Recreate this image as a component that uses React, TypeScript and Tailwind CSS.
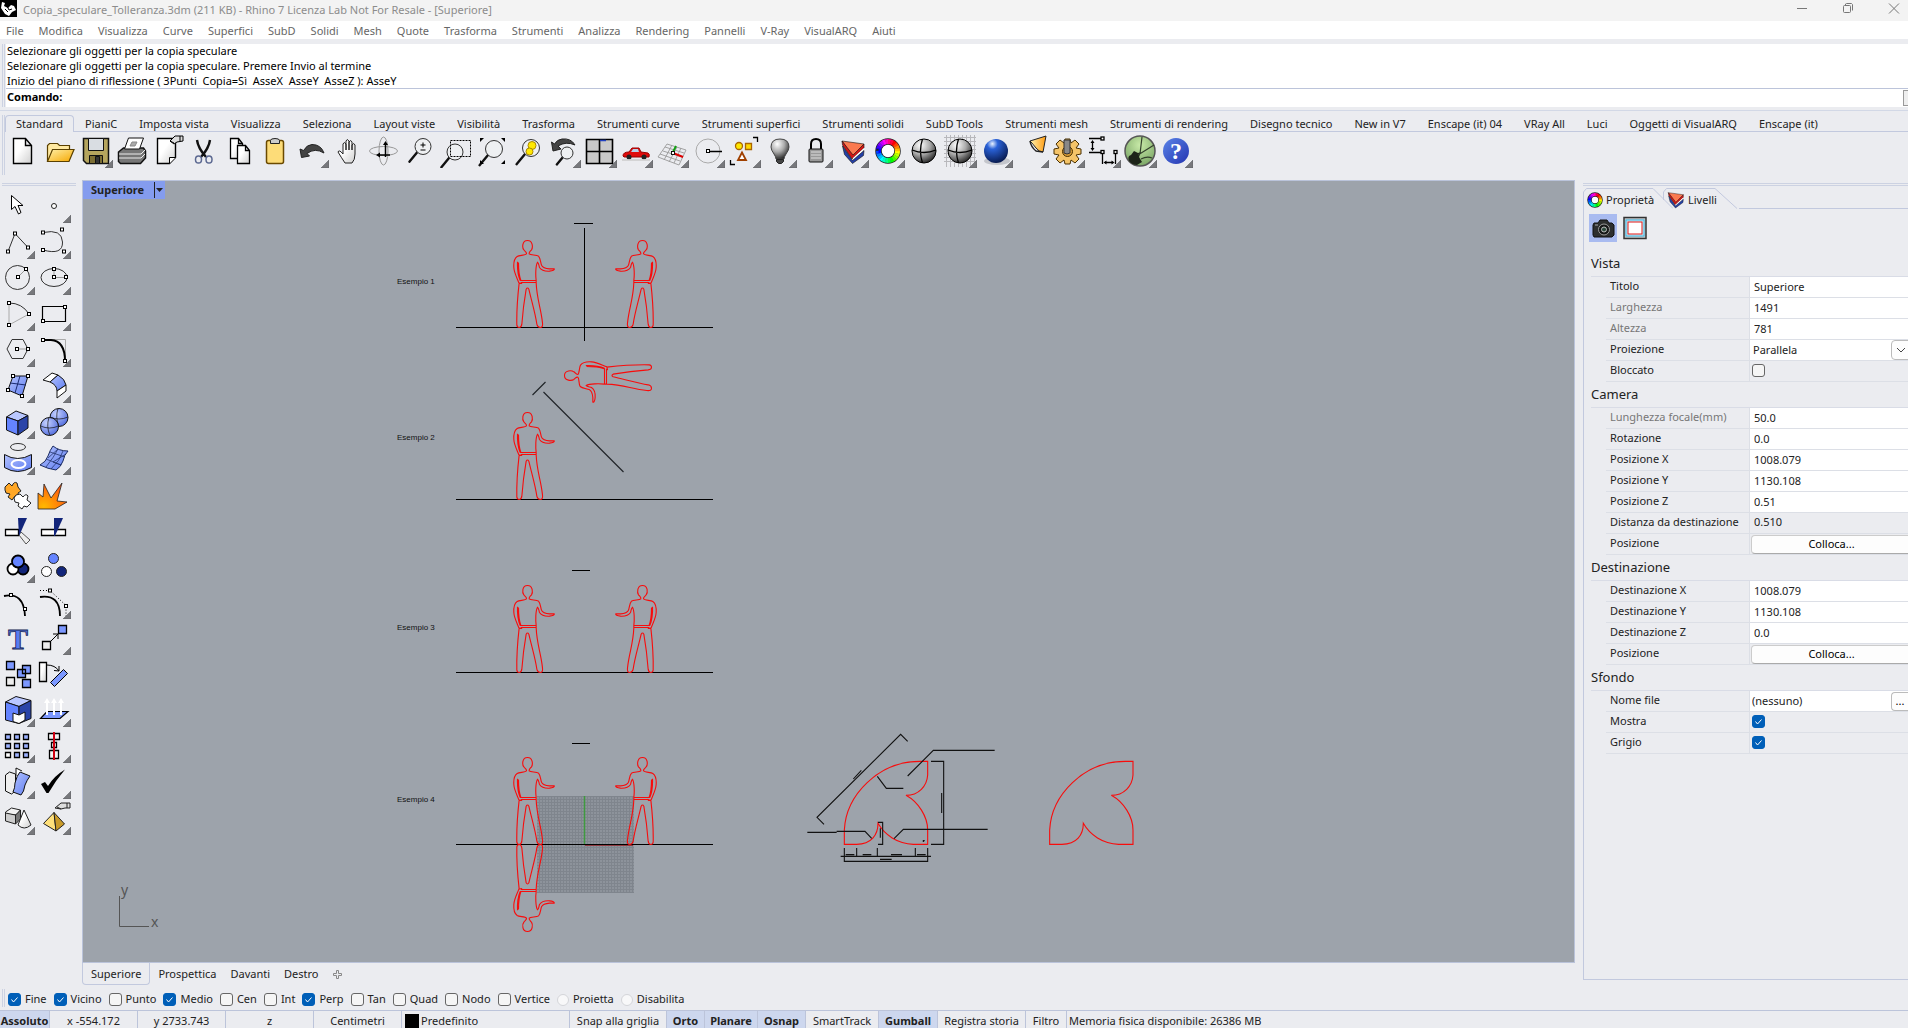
import { useState } from "react";
import type { ReactNode } from "react";

const MENU = ["File", "Modifica", "Visualizza", "Curve", "Superfici", "SubD", "Solidi", "Mesh", "Quote", "Trasforma", "Strumenti", "Analizza", "Rendering", "Pannelli", "V-Ray", "VisualARQ", "Aiuti"];

const TOOLBAR_TABS = ["Standard", "PianiC", "Imposta vista", "Visualizza", "Seleziona", "Layout viste", "Visibilità", "Trasforma", "Strumenti curve", "Strumenti superfici", "Strumenti solidi", "SubD Tools", "Strumenti mesh", "Strumenti di rendering", "Disegno tecnico", "New in V7", "Enscape (it) 04", "VRay All", "Luci", "Oggetti di VisualARQ", "Enscape (it)"];

type Tool = { name: string; more?: boolean; art: ReactNode };

// small square control point
function Node({ x, y }: { x: number; y: number }) {
  return <rect x={x - 1.5} y={y - 1.5} width="3" height="3" fill="#fff" stroke="#000" />;
}

function ColorRing({ cx, cy, r, w }: { cx: number; cy: number; r: number; w: number }) {
  return (
    <g fill="none">
      <circle cx={cx} cy={cy} r={r} fill="#fff" stroke="#222" strokeWidth={w + 1.5} />
      {Array.from({ length: 24 }, (_, i) => (
        <circle key={i} cx={cx} cy={cy} r={r} pathLength={24} stroke={`hsl(${(i * 15 + 60) % 360} 100% 50%)`} strokeWidth={w} strokeDasharray="1.1 22.9" strokeDashoffset={-i} />
      ))}
    </g>
  );
}

function Lens({ x, y, r }: { x: number; y: number; r: number }) {
  return (
    <g>
      <path d={`M${x - r * 0.7} ${y + r * 0.7}L${x - r * 1.7} ${y + r * 1.9}`} stroke="#111" strokeWidth="2.4" strokeLinecap="round" />
      <circle cx={x} cy={y} r={r} fill="#eef0f2" stroke="#333" />
    </g>
  );
}

const LAYERS_ART = (
  <g stroke="#111" strokeWidth="0.600" strokeLinejoin="round">
    <path d="M9 9l22 3-11 13z" fill="#fb7a50" />
    <path d="M9 9l11 14 11-11v4L19 27 9.500 13z" fill="#d01616" />
    <path d="M20 26l11-10v2L19.500 28.500z" fill="#fff" stroke="none" />
    <path d="M9.500 14L19.500 28.500 31 18.500l-.5 5L19.500 31.500l-8-9z" fill="#2440a8" />
  </g>
);

const TOP_TOOLS: Tool[] = [
  { name: "Nuovo", art: <path d="M8.500 6.500h12l6 7v18h-18zM20.500 6.500v7h6" fill="url(#paper)" stroke="#000" strokeWidth="1.400" /> },
  {
    name: "Apri",
    art: (
      <g stroke="#5a4000" strokeWidth="1.200">
        <path d="M6.500 29V13.500l2-2h8l2 2h10V18" fill="#ffe9a0" />
        <path d="M6.500 29.500l5-12h21.500l-5 12z" fill="url(#gold)" />
      </g>
    ),
  },
  {
    name: "Salva",
    more: true,
    art: (
      <g stroke="#111">
        <path d="M6.500 6.500h25v25h-22l-3-3z" fill="#b5a55e" strokeWidth="1.500" />
        <path d="M11.500 6.500h15v12h-15z" fill="#d9dde2" />
        <path d="M12.500 23.500h13v8h-13z" fill="#7c6e34" />
        <path d="M18.500 24.500h4v7h-4z" fill="#333" />
      </g>
    ),
  },
  {
    name: "Stampa",
    art: (
      <g stroke="#111">
        <path d="M5.500 20l5-4h20l2 3v7l-5 5.500h-20l-2-2z" fill="#777" strokeWidth="1.500" />
        <path d="M11.500 17l4-11h15l-4 11z" fill="#fff" />
        <path d="M17 14l2-4h5l-2 4z" fill="#aaa" stroke="#888" />
        <path d="M6 22h22l4-4M6 26h22l4-4" fill="none" stroke="#eee" />
      </g>
    ),
  },
  {
    name: "Proprietà documento",
    art: (
      <g stroke="#000">
        <path d="M8.500 6.500h18v19l-6 6h-12z" fill="url(#paper)" strokeWidth="1.400" />
        <path d="M20.500 31.500v-6h6" fill="#fff" />
        <path d="M21 9l5-5h8v5l-6 1-3 2z" fill="#ddd" />
        <path d="M31 4v5M21 9l4 2" fill="none" />
      </g>
    ),
  },
  {
    name: "Taglia",
    art: (
      <g fill="none" strokeWidth="1.500">
        <path d="M12 8q1 8 9 17M25 8q-1 8-9 17" stroke="#111" strokeWidth="2.400" />
        <ellipse cx="13.500" cy="27.500" rx="3" ry="3.600" stroke="#5a6790" />
        <ellipse cx="24" cy="27.500" rx="3" ry="3.600" stroke="#5a6790" />
      </g>
    ),
  },
  {
    name: "Copia",
    art: (
      <g fill="url(#paper)" stroke="#000" strokeWidth="1.300">
        <path d="M9.500 6.500h8l4 5v15h-12zM17.500 6.500v5h4" />
        <path d="M16.500 13.500h8l4 5v13h-12zM24.500 13.500v5h4" />
      </g>
    ),
  },
  {
    name: "Incolla",
    art: (
      <g stroke="#6b4a00">
        <rect x="9.500" y="8.500" width="17" height="23" rx="2" fill="#fddc78" strokeWidth="1.500" />
        <path d="M13.500 8.500q0-2 4.500-2t4.500 2v3h-9z" fill="#ccc" stroke="#222" />
      </g>
    ),
  },
  {
    name: "Annulla",
    more: true,
    art: <path d="M7 17l1.500 8.500 8-1.500-2.500-2.500q8-6 17-.5-3-8.500-12-8.500-5 0-8.500 6z" fill="#444" stroke="#222" />,
  },
  {
    name: "Panoramica",
    art: <path d="M16 31q-4-6-7-11 1-3 5 2V12q1-3 3 0v6-9q1-3 3 0v9-8q2-3 3 0v8-5q2-3 3 0v9q0 6-3 9z" fill="url(#paper)" stroke="#222" />,
  },
  {
    name: "Ruota vista",
    art: (
      <g fill="none" stroke="#999">
        <ellipse cx="18.500" cy="19" rx="14" ry="4.500" />
        <ellipse cx="18.500" cy="19" rx="4.500" ry="14" />
        <path d="M20.500 12v13M13 23h12" stroke="#000" strokeWidth="1.500" />
        <path d="M18 13l2.500-4 2.500 4zM15 20.500L11 23l4 2.500z" fill="#000" stroke="none" />
      </g>
    ),
  },
  {
    name: "Zoom dinamico",
    art: (
      <g>
        <Lens x={22} y={14.500} r={8} />
        <path d="M19.500 13h5M22 10.500v5M19.500 18h5" stroke="#000" />
      </g>
    ),
  },
  {
    name: "Zoom finestra",
    art: (
      <g>
        <Lens x={18} y={20} r={8} />
        <path d="M13.500 8.500h20v16h-20z" fill="none" stroke="#000" strokeDasharray="2 1" />
      </g>
    ),
  },
  {
    name: "Zoom estensioni",
    art: (
      <g>
        <Lens x={21} y={17} r={8.500} />
        <path d="M7 6h4l-4 4zM32 6h-4l4 4zM7 32h4l-4-4zM32 32h-4l4-4z" fill="#000" />
      </g>
    ),
  },
  {
    name: "Zoom selezione",
    art: (
      <g>
        <Lens x={22} y={16} r={8.500} />
        <circle cx="23" cy="13.500" r="4" fill="#ffe800" stroke="#a80" />
        <circle cx="20.500" cy="19.500" r="3.500" fill="#ffe800" stroke="#a80" />
      </g>
    ),
  },
  {
    name: "Annulla vista",
    more: true,
    art: (
      <g>
        <path d="M6.500 10l1.500 9 8-2-3-3q8-5 17-1-4-7-13-6-5 .5-7.500 5z" fill="#444" stroke="#222" />
        <Lens x={22} y={21} r={6} />
      </g>
    ),
  },
  {
    name: "Quattro viste",
    more: true,
    art: (
      <g stroke="#000">
        <path d="M5.500 7.500h26v24h-26z" fill="#c9c9c9" strokeWidth="1.600" />
        <path d="M18.500 7.500v24M5.500 19.500h26" strokeWidth="1.600" />
        <path d="M19 8.500h6" stroke="#2040c0" strokeWidth="1.500" />
      </g>
    ),
  },
  {
    name: "Auto",
    more: true,
    art: (
      <g>
        <path d="M6 24q0-4 6-4l3-4h7l2 4 7 1q2 1 1 4H7z" fill="#e00b0b" stroke="#900" />
        <path d="M14 20l2-3h5l1 3z" fill="#b8d0e8" />
        <circle cx="12" cy="25" r="2.500" fill="#222" />
        <circle cx="27" cy="25" r="2.500" fill="#222" />
        <path d="M5 28h28" stroke="#ccc" strokeWidth="1.500" />
      </g>
    ),
  },
  {
    name: "Piano di costruzione",
    more: true,
    art: (
      <g fill="none" stroke="#999" strokeWidth="0.900">
        <path d="M14 12l19 6-7 15-21-8zM12 15l19 6M10 19l19 6M7 22l20 7M19 13l-8 15M24 15l-8 15M28 16l-7 15" />
        <path d="M20 20l3-6" stroke="#11a011" strokeWidth="2" />
        <path d="M20 21l10 4" stroke="#d00" strokeWidth="2" />
        <Node x={20} y={21} />
      </g>
    ),
  },
  {
    name: "Osnap",
    more: true,
    art: (
      <g>
        <circle cx="19" cy="19" r="12" fill="none" stroke="#aaa" />
        <path d="M19 19.500h14" stroke="#000" strokeWidth="1.500" />
        <Node x={19} y={19} />
      </g>
    ),
  },
  {
    name: "Seleziona",
    more: true,
    art: (
      <g strokeWidth="1.300">
        <circle cx="14" cy="14" r="3.500" fill="#ffe800" stroke="#a60" />
        <path d="M20.500 11.500h6v6h-6z" fill="#ffd800" stroke="#a60" />
        <path d="M17 20.500l4 7.500h-8z" fill="#fff" stroke="#a04000" strokeWidth="1.800" />
        <path d="M28 5.500h4.500V10M5.500 28v4.500H10" fill="none" stroke="#000" />
      </g>
    ),
  },
  {
    name: "Nascondi",
    more: true,
    art: (
      <g>
        <path d="M19 7q-9 0-9 8 0 3 3 7 2 3 2 5h8q0-2 2-5 3-4 3-7 0-8-9-8z" fill="url(#grayBall)" stroke="#444" />
        <path d="M15.500 27.500h7v2l-2 2h-3l-2-2z" fill="#444" stroke="#222" />
      </g>
    ),
  },
  {
    name: "Blocca",
    more: true,
    art: (
      <g>
        <path d="M14 17v-5q0-5 5-5t5 5v5" fill="none" stroke="#000" strokeWidth="2" />
        <rect x="12" y="17" width="14" height="13" rx="1" fill="#999" stroke="#111" />
        <path d="M14 20h10M14 23h10M14 26h10" stroke="#ddd" />
      </g>
    ),
  },
  { name: "Livelli", more: true, art: LAYERS_ART },
  { name: "Colore oggetto", more: true, art: <ColorRing cx={19} cy={19} r={9.500} w={5} /> },
  {
    name: "Ombreggiata",
    art: (
      <g>
        <circle cx="19" cy="19" r="12" fill="url(#grayBall)" stroke="#000" />
        <path d="M17.500 7q-4 12 0 24M7 18q12 5 24 0" fill="none" stroke="#000" strokeWidth="1.300" />
      </g>
    ),
  },
  {
    name: "Ombreggiata selezionati",
    more: true,
    art: (
      <g>
        <path d="M3 5.500h32M3 9.500h32M3 13.500h32M3 17.500h32M3 21.500h32M3 25.500h32M3 29.500h32M5.500 3v32M9.500 3v32M13.500 3v32M17.500 3v32M21.500 3v32M25.500 3v32M29.500 3v32M33.500 3v32" stroke="#b8b8bc" />
        <circle cx="19" cy="19" r="12" fill="url(#grayBall)" stroke="#000" />
        <path d="M17.500 7q-4 12 0 24M7 18q12 5 24 0" fill="none" stroke="#000" strokeWidth="1.300" />
      </g>
    ),
  },
  {
    name: "Render",
    more: true,
    art: (
      <g>
        <ellipse cx="20" cy="29" rx="13" ry="4" fill="#c4c6cc" />
        <circle cx="19" cy="19" r="12" fill="url(#blueBall)" />
      </g>
    ),
  },
  {
    name: "Luci",
    more: true,
    art: (
      <g stroke="#222">
        <path d="M17 9l16-5-3 16q-4 0-7-4t-6-7z" fill="url(#spot)" />
        <path d="M17 9q1 6 6 10l7 1" fill="none" strokeWidth="1.500" />
      </g>
    ),
  },
  {
    name: "Opzioni",
    more: true,
    art: (
      <g>
        <path d="M16 7h5l1 4 4-3 4 4-3 4 5 1v5l-5 1 3 4-4 4-4-3-1 4h-5l-1-4-4 3-4-4 3-4-5-1v-5l5-1-3-4 4-4 4 3z" fill="#f5c468" stroke="#4a3000" />
        <circle cx="18.500" cy="19.500" r="5" fill="#d69a34" stroke="#4a3000" />
        <path d="M15 8h6v13q-3 2-6 0z" fill="#888" stroke="#333" />
      </g>
    ),
  },
  {
    name: "Quote",
    more: true,
    art: (
      <g stroke="#000" strokeWidth="1.300" fill="none">
        <path d="M4 6.500h14M4 20.500h14M7.500 10v7M17.500 20v12M30.500 20v12M20 30.500h8" />
        <path d="M5.500 11l2-3 2 3zM5.500 16l2 3 2-3zM21.500 28.500l-3 2 3 2zM26.500 28.500l3 2-3 2z" fill="#000" stroke="none" />
        <Node x={17.500} y={6.500} />
        <Node x={17.500} y={20} />
        <Node x={30.500} y={20} />
      </g>
    ),
  },
  {
    name: "Grasshopper",
    more: true,
    art: (
      <g>
        <circle cx="19" cy="19" r="15" fill="url(#greenBall)" stroke="#555" strokeWidth="1.500" />
        <path d="M8 29q-2-5 2-6l3-4 4 2 3-1-2 5 3 5-5 3q-5 0-8-4z" fill="#1c2418" />
        <path d="M17 23L33 13M19 22L21 5M20 27q6-3 11-1" fill="none" stroke="#33402c" strokeWidth="1.200" />
      </g>
    ),
  },
  {
    name: "Guida",
    more: true,
    art: (
      <g>
        <circle cx="19" cy="19" r="13" fill="url(#helpBall)" />
        <text x="19" y="27" textAnchor="middle" fill="#fff" fontSize="24" fontWeight="700" fontFamily="Liberation Serif, serif">?</text>
      </g>
    ),
  },
];

const SIDE_TOOLS: Tool[] = [
  { name: "Seleziona", art: <path d="M12.500 8.500v14l3.500-3 3.500 7.500 2.500-1.500-3-7h5z" fill="#fff" stroke="#000" /> },
  { name: "Punto", more: true, art: <circle cx="19" cy="19" r="2.500" fill="#fff" stroke="#222" /> },
  {
    name: "Polilinea",
    more: true,
    art: (
      <g>
        <path d="M9 28.500l7-18 13 14" fill="none" stroke="#333" />
        <Node x={9} y={28.500} />
        <Node x={16} y={10.500} />
        <Node x={29} y={24.500} />
      </g>
    ),
  },
  {
    name: "Curva",
    more: true,
    art: (
      <g>
        <path d="M8 9.500q19-4 19.500 9.500T8 27" fill="none" stroke="#333" />
        <Node x={8} y={9.500} />
        <Node x={27} y={6.500} />
        <Node x={8} y={27} />
        <Node x={29} y={28.500} />
      </g>
    ),
  },
  {
    name: "Cerchio",
    more: true,
    art: (
      <g>
        <circle cx="18.500" cy="18.500" r="12" fill="none" stroke="#333" />
        <path d="M19 18l8-8" stroke="#999" />
        <Node x={19} y={18} />
        <Node x={27} y={10} />
      </g>
    ),
  },
  {
    name: "Ellisse",
    more: true,
    art: (
      <g>
        <ellipse cx="19" cy="18.500" rx="13" ry="9" fill="none" stroke="#333" />
        <path d="M19 10v8.500h12" fill="none" stroke="#999" />
        <Node x={19} y={10} />
        <Node x={19} y={18} />
        <Node x={31} y={18} />
      </g>
    ),
  },
  {
    name: "Arco",
    more: true,
    art: (
      <g fill="none">
        <path d="M10 8v22l20-11" stroke="#aaa" />
        <path d="M10 8q13 0 20 11" stroke="#333" />
        <Node x={10} y={8} />
        <Node x={30} y={19} />
        <Node x={10} y={30} />
      </g>
    ),
  },
  {
    name: "Rettangolo",
    more: true,
    art: (
      <g>
        <path d="M7.500 11.500h23v15h-23z" fill="none" stroke="#000" strokeWidth="1.200" />
        <Node x={30} y={12} />
        <Node x={8} y={26} />
      </g>
    ),
  },
  {
    name: "Poligono",
    more: true,
    art: (
      <g>
        <path d="M8 18l5-9.500h11L29 18l-5 9.500H13z" fill="none" stroke="#333" />
        <path d="M18 18h11" stroke="#999" />
        <Node x={18} y={18} />
        <Node x={29} y={18} />
      </g>
    ),
  },
  {
    name: "Raccorda",
    more: true,
    art: (
      <g fill="none">
        <path d="M8 8.500h22.500V30" stroke="#aaa" />
        <path d="M8 9h8q14 1 14 21" stroke="#000" strokeWidth="2" />
        <Node x={8} y={9} />
        <Node x={30} y={30} />
      </g>
    ),
  },
  {
    name: "Superficie",
    more: true,
    art: (
      <g>
        <path d="M14 9h15l-6 20-14-6z" fill="url(#blue)" stroke="#111" />
        <path d="M21 9l-5 17M11 16l16 2" stroke="#1a2a70" />
        <Node x={14} y={9} />
        <Node x={29} y={9} />
        <Node x={23} y={29} />
        <Node x={9} y={23} />
      </g>
    ),
  },
  {
    name: "Raccorda superfici",
    more: true,
    art: (
      <g stroke="#111">
        <path d="M8 13l9-7 6 2-8 7z" fill="#fff" />
        <path d="M15 15l8-7q7 4 8 10l-9 6q0-6-7-9z" fill="url(#blue)" />
        <path d="M22 24l9-6v6l-9 7z" fill="#fff" />
      </g>
    ),
  },
  {
    name: "Parallelepipedo",
    more: true,
    art: (
      <g stroke="#111" strokeLinejoin="round">
        <path d="M17 8l12 4.500L19 18 7.500 14z" fill="#b9c7ff" />
        <path d="M7.500 14L19 18v14L7.500 27z" fill="#6484ff" />
        <path d="M19 18l10-5.500V25l-10 7z" fill="#2a44a8" />
      </g>
    ),
  },
  {
    name: "Sfere",
    more: true,
    art: (
      <g stroke="#111">
        <circle cx="24" cy="14.500" r="9" fill="url(#blueSoft)" />
        <path d="M23 5.500q-3 9 1 18M15 14q9 4 18 0" fill="none" strokeWidth="0.700" />
        <circle cx="14.500" cy="23.500" r="9" fill="url(#blueSoft)" />
        <path d="M14 14.500q-3 9 1 18M5.500 23q9 4 18 0" fill="none" strokeWidth="0.700" />
      </g>
    ),
  },
  {
    name: "Superficie da curve",
    more: true,
    art: (
      <g>
        <ellipse cx="19" cy="8" rx="7.500" ry="3.500" fill="none" stroke="#333" />
        <path d="M5.500 15.500q13 8 27 0v13q-14 8-27 0z" fill="url(#blue)" stroke="#111" />
        <ellipse cx="19.500" cy="25" rx="7" ry="4" fill="none" stroke="#fff" strokeWidth="2" />
      </g>
    ),
  },
  {
    name: "Mesh",
    more: true,
    art: (
      <g stroke="#1a2a60">
        <path d="M18 7q6 5 15 5-4 4-5 10-2 6-7 9-8-1-16-5 6-3 8-9 2-6 5-10z" fill="url(#blue)" />
        <path d="M23 10q-4 8-12 18M28 12q-3 10-12 18M15 13l15 5M11 20l15 6M23 10l-10 9M31 15l-13 8M26 26l-8-3" fill="none" strokeWidth="0.700" />
      </g>
    ),
  },
  {
    name: "Unisci",
    art: (
      <g stroke="#222">
        <path d="M6 12l4-4 3 3q2-5 5-3l1 4 3 4-3 2 1 4-4-1-3 4-4-3 2-3-4-1-1-3z" fill="#ffa726" />
        <path d="M17 20l4-1 3 3q3-4 5-1l-1 4 4 3-4 4-3-1-2 3-4-3 1-3-4-1-1-4z" fill="#fff" />
      </g>
    ),
  },
  { name: "Esplodi", art: <path d="M3 34V18l5 4L9 9l7 14L27 8l-5 18 10 1-12 7z" fill="url(#blast)" stroke="#222" strokeWidth="0.800" /> },
  {
    name: "Tronca",
    art: (
      <g>
        <path d="M6.500 18.500h13v6h-13z" fill="#fff" stroke="#000" strokeWidth="1.300" />
        <path d="M22 21l9 8-4 4-7-9z" fill="#eee" stroke="#555" />
        <path d="M19 7h9l-8 18z" fill="#12257a" />
      </g>
    ),
  },
  {
    name: "Suddividi",
    art: (
      <g>
        <path d="M6.500 18.500h24v6h-24z" fill="#fff" stroke="#000" strokeWidth="1.300" />
        <path d="M19 7h9l-8 18h-1z" fill="#12257a" />
      </g>
    ),
  },
  {
    name: "Booleana",
    more: true,
    art: (
      <g stroke="#000" strokeWidth="1.800">
        <circle cx="24" cy="22" r="5.500" fill="#12257a" />
        <circle cx="14" cy="22" r="5.500" fill="#fff" />
        <circle cx="19" cy="14.500" r="6" fill="#6484ff" />
      </g>
    ),
  },
  {
    name: "Raggruppa",
    art: (
      <g stroke="#222">
        <circle cx="18.500" cy="11.500" r="5" fill="#6484ff" />
        <circle cx="11.500" cy="24.500" r="5" fill="#fff" />
        <circle cx="26.500" cy="24.500" r="5" fill="#12257a" />
      </g>
    ),
  },
  {
    name: "Modifica punti",
    art: (
      <g>
        <path d="M5 13q20-4 21 20" fill="none" stroke="#000" strokeWidth="1.800" />
        <Node x={12} y={12} />
        <Node x={26} y={26} />
      </g>
    ),
  },
  {
    name: "Punti di controllo",
    more: true,
    art: (
      <g fill="none" stroke="#000">
        <path d="M5 14q20-3 20 19" strokeWidth="1.800" />
        <path d="M5 7.500h10l16 15V33" strokeDasharray="1 2" />
        <Node x={15} y={7.500} />
        <Node x={31} y={23} />
      </g>
    ),
  },
  {
    name: "Testo",
    art: <text x="19" y="30" textAnchor="middle" fill="#5a7cf0" stroke="#111c50" strokeWidth="0.800" fontSize="30" fontWeight="700" fontFamily="Liberation Serif, serif">T</text>,
  },
  {
    name: "Sposta",
    more: true,
    art: (
      <g stroke="#000">
        <path d="M7.500 22.500h8v8h-8z" fill="#eee" strokeWidth="1.300" />
        <path d="M23.500 6.500h8v8h-8z" fill="#7c98ff" strokeWidth="1.300" />
        <path d="M16 22l7-7M18 15h5v5" fill="none" />
      </g>
    ),
  },
  {
    name: "Copia oggetti",
    art: (
      <g stroke="#000" strokeWidth="1.300" fill="#7c98ff">
        <path d="M7.500 6.500h8v8h-8zM23.500 10.500h8v8h-8zM18.500 14.500h8v8h-8zM23.500 24.500h8v8h-8z" />
        <path d="M7.500 22.500h8v8h-8z" fill="#eee" />
      </g>
    ),
  },
  {
    name: "Ruota",
    art: (
      <g stroke="#000">
        <path d="M4.500 7.500h7v19h-7z" fill="url(#paper)" strokeWidth="1.300" />
        <path d="M28.500 14.500l4 4-13 13-4-4z" fill="#7c98ff" />
        <path d="M12 10q8 0 12 6M19 15.500l5 .5V11" fill="none" />
      </g>
    ),
  },
  {
    name: "Scala",
    more: true,
    art: (
      <g stroke="#111" strokeLinejoin="round">
        <path d="M17 5.500l15 4-12 6-13.500-4.500z" fill="#b9c7ff" />
        <path d="M6.500 11L20 15.500v17L6.500 29z" fill="#6484ff" />
        <path d="M20 15.500l12-6v18l-12 5z" fill="#2a44a8" />
        <path d="M14 22l6 2 6-3v8l-6 3.500-6-2z" fill="#fff" />
      </g>
    ),
  },
  {
    name: "Proietta",
    more: true,
    art: (
      <g>
        <path d="M12 20.500h21l-8 7H5.500z" fill="#7c98ff" stroke="#000" strokeWidth="1.200" />
        <path d="M12 24V10M19 24V10M26 24V10" stroke="#fff" strokeWidth="2" />
        <path d="M9 12l3-5 3 5zM16 12l3-5 3 5zM23 12l3-5 3 5z" fill="#fff" />
      </g>
    ),
  },
  {
    name: "Serie",
    more: true,
    art: (
      <g stroke="#000" strokeWidth="1.300" fill="#9db2ff">
        <path d="M6.500 7.500h5v5h-5zM15.500 7.500h5v5h-5zM24.500 7.500h5v5h-5zM6.500 16.500h5v5h-5zM15.500 16.500h5v5h-5zM24.500 16.500h5v5h-5zM15.500 25.500h5v5h-5zM24.500 25.500h5v5h-5z" />
        <path d="M6.500 25.500h5v5h-5z" fill="#fff" />
      </g>
    ),
  },
  {
    name: "Allinea",
    more: true,
    art: (
      <g stroke="#000" fill="#f2f2f2">
        <path d="M13.500 6.500h11v6h-11zM16.500 15.500h5v5h-5zM14.500 23.500h9v8h-9z" strokeWidth="1.300" />
        <path d="M19 5v28" stroke="#d00010" strokeWidth="2" />
      </g>
    ),
  },
  {
    name: "Piega",
    more: true,
    art: (
      <g stroke="#111">
        <path d="M6.500 12l4-3 6 2v17l-4 3-6-3z" fill="#eee" />
        <path d="M17 13V5l6 3" fill="#fff" />
        <path d="M16 20q2-8 5-11l10 4q-3 4-5 9-1 7-4 10l-8-3q2-4 2-9z" fill="url(#blue)" />
      </g>
    ),
  },
  { name: "Controlla", more: true, art: <path d="M6 21l4-2 3 4Q19 13 30 6.500 21 17 13.500 30h-2z" fill="#000" /> },
  {
    name: "Solidi",
    more: true,
    art: (
      <g stroke="#222" strokeLinejoin="round">
        <path d="M6.500 13l6-4 9 2-4 5-11-1z" fill="#f2f2f2" />
        <path d="M6.500 14l10 2v9l-10-3z" fill="#ccc" />
        <path d="M16.500 16l5-5v9l-5 5z" fill="#777" />
        <path d="M25 11l7 15q-7 6-13 0z" fill="url(#paper)" />
      </g>
    ),
  },
  {
    name: "Rendering",
    more: true,
    art: (
      <g stroke="#222">
        <path d="M19 13.500L8.500 24.500 21 32z" fill="#ffe07a" />
        <path d="M19 13.500L29.500 25 21 32z" fill="#c99a28" />
        <path d="M20 9l6-5h9v5h-5l-4 1z" fill="#ddd" />
        <path d="M32 4v5M22 8l4 2" fill="none" />
      </g>
    ),
  },
];

function ToolButton({ tool }: { tool: Tool }) {
  return (
    <button type="button" title={tool.name} aria-label={tool.name} className="h-9 w-9 shrink-0">
      <svg viewBox="0 0 36 36" className="h-9 w-9" fill="none">
        {tool.art}
        {tool.more && <path d="M36 28v8h-8z" fill="#77787c" stroke="#55565a" strokeWidth="0.500" />}
      </svg>
    </button>
  );
}

function Gradients() {
  return (
    <svg className="absolute h-0 w-0" aria-hidden="true">
      <defs>
        <linearGradient id="paper" x2="1" y2="1"><stop offset="0.400" stopColor="#fff" /><stop offset="1" stopColor="#cfcfcf" /></linearGradient>
        <linearGradient id="gold" y2="1" x2="1"><stop stopColor="#fff0a8" /><stop offset="1" stopColor="#f5a700" /></linearGradient>
        <linearGradient id="spot" x2="1"><stop stopColor="#fff3b0" /><stop offset="1" stopColor="#ff9a10" /></linearGradient>
        <linearGradient id="blue" x2="1" y2="1"><stop stopColor="#b4c3ff" /><stop offset="1" stopColor="#5d7cf0" /></linearGradient>
        <radialGradient id="blast" cx="0.200" cy="0.900" r="0.900"><stop stopColor="#ffb800" /><stop offset="1" stopColor="#ff5a10" /></radialGradient>
        <radialGradient id="grayBall" cx="0.350" cy="0.250" r="0.800"><stop stopColor="#fff" /><stop offset="0.500" stopColor="#aaa" /><stop offset="1" stopColor="#222" /></radialGradient>
        <radialGradient id="blueBall" cx="0.350" cy="0.200" r="0.900"><stop stopColor="#e8f2ff" /><stop offset="0.250" stopColor="#2a62d8" /><stop offset="1" stopColor="#03103c" /></radialGradient>
        <radialGradient id="blueSoft" cx="0.350" cy="0.300" r="0.800"><stop stopColor="#c6d2ff" /><stop offset="1" stopColor="#4a66dc" /></radialGradient>
        <radialGradient id="greenBall" cx="0.500" cy="0.300" r="0.800"><stop stopColor="#c8eaa8" /><stop offset="1" stopColor="#6f9c5c" /></radialGradient>
        <linearGradient id="helpBall" y2="1"><stop stopColor="#5a84e8" /><stop offset="1" stopColor="#2434b0" /></linearGradient>
        <pattern id="grid" width="3" height="3" patternUnits="userSpaceOnUse"><path d="M0 .5h3M.5 0v3" stroke="#7f858d" /></pattern>
        <path
          id="person"
          vectorEffect="non-scaling-stroke"
          fill="none"
          stroke="#f80c0c"
          strokeWidth="1.100"
          d="M-3-221C-2-226-8-228-11-233-16-239-17-261 0-261S16-239 12-233C8-228 4-226 5-221 9-216 27-219 33-214 39-208 39-195 42-187 46-179 55-177 66-176H80C82-173 76-170 66-169 50-168 42-171 36-180 34-185 34-194 30-196 24-186 24-155 26-141M-30-197C-31-172-28-155-22-141M-27-195C-27-170-25-155-20-142M-3-221C-6-216-25-217-31-213-41-206-42-195-41-180-40-163-31-148-26-134L-18-132-15-136M-22-141H26V-135H-20M-25-134C-30-90-33-50-32-7-31-1-28 0-25 0-20 0-18-3-17-10-14-50-8-92-4-115Q0-122 4-115C12-80 24-40 28-10 30-2 34 0 38 0 44 0 46-4 45-14 40-60 28-84 26-134"
        />
        <path
          id="leaf"
          vectorEffect="non-scaling-stroke"
          fill="none"
          stroke="#f80c0c"
          strokeWidth="1.100"
          d="M163 373V330C168 225 265 124 390 124H413V165C411 198 386 226 348 226 385 246 413 290 413 330V373H370C322 371 284 345 264 310 264 345 244 373 200 373Z"
        />
      </defs>
    </svg>
  );
}

function Person({ at }: { at: string }) {
  return <use href="#person" transform={`matrix(${at}) scale(.33333)`} />;
}

function Drawing() {
  return (
    <svg viewBox="0 0 1491 781" preserveAspectRatio="xMinYMin meet" className="h-[781px] w-[1491px] max-w-none" role="img" aria-label="Vista superiore">
      <rect x="454" y="615" width="97" height="97" fill="#8d939b" />
      <rect x="454" y="615" width="97" height="97" fill="url(#grid)" />
      <path d="M501.500 615v48" stroke="#3f9a3f" strokeWidth="1.500" />
      <path d="M502 664.500h48" stroke="#8e3a40" />
      <g stroke="#000" fill="none" shapeRendering="crispEdges">
        <path d="M373 146.500h257M373 318.500h257M373 491.500h257M373 663.500h257" />
        <path d="M491 42.500h19M501.500 47v113M489 389.500h18M489 562.500h18" />
      </g>
      <path d="M449.500 214l13-13M460.500 211l80 80" stroke="#22262a" strokeWidth="1.200" />

      <Person at="1 0 0 1 444.500 146.500" />
      <Person at="-1 0 0 1 559.500 146.500" />
      <Person at="0 1 1 0 568.500 194.500" />
      <Person at="1 0 0 1 444.500 318.500" />
      <Person at="1 0 0 1 444.500 491.500" />
      <Person at="-1 0 0 1 559.500 491.500" />
      <Person at="1 0 0 1 444.500 663.500" />
      <Person at="-1 0 0 1 559.500 663.500" />
      <Person at="1 0 0 -1 444.500 663.500" />

      <g transform="translate(707 539) scale(.33333)">
        <use href="#leaf" />
        <use href="#leaf" x="616" />
        <g stroke="#111" strokeWidth="3.300" fill="none">
          <path d="M353 64l-21-21L81 292l21 21M190 177l24-26M353 168l77-77h184M262 169l27 36h51" />
          <path d="M423 124h38v249h-38M455 219v60M52 337h88M140 334h85l20 21M312 356l28-28h253M264 307h14v66h-14M271 325v28M400 366v-4h4" />
          <path d="M163 384v40h250v-40M152 409h271M200 384v25M262 384v25M376 384v25M167 404h26M218 404h26M303 404h33M381 404h26M270 418h35" />
        </g>
      </g>

      <g fontFamily="Liberation Sans, sans-serif" fontSize="8" fill="#111">
        <text x="314" y="103">Esempio 1</text>
        <text x="314" y="259">Esempio 2</text>
        <text x="314" y="449">Esempio 3</text>
        <text x="314" y="621">Esempio 4</text>
      </g>
      <path d="M36.500 715v30.500H66" fill="none" stroke="#555" />
      <g fontSize="14" fill="#555">
        <text x="38" y="714">y</text>
        <text x="68" y="746">x</text>
      </g>
    </svg>
  );
}

function Check({ id, label, on = false, round = false, hideLabel = false }: { id: string; label: string; on?: boolean; round?: boolean; hideLabel?: boolean }) {
  const [checked, setChecked] = useState(on);
  const box = round
    ? "block h-3 w-3 appearance-none rounded-full border border-[#d4d5d9] bg-[#f8f8f9]"
    : "block h-[13px] w-[13px] appearance-none rounded-[3px] border border-[#666] bg-[#f5f5f5] checked:border-[#005fb8] checked:bg-[#005fb8]";
  return (
    <span className="flex items-center gap-1">
      <span className="relative">
        <input id={id} type="checkbox" aria-label={label} checked={checked} onChange={() => setChecked(!checked)} className={box} />
        {checked && (
          <svg viewBox="0 0 13 13" className="pointer-events-none absolute inset-0 h-[13px] w-[13px]" fill="none" stroke="#fff">
            <path d="M3.500 6.500l2 2.500 4-4.500" />
          </svg>
        )}
      </span>
      {!hideLabel && <label htmlFor={id}>{label}</label>}
    </span>
  );
}

type Row = { label: string; value?: string; kind?: "select" | "check" | "button" | "file" | "static"; on?: boolean; dim?: boolean };

const SECTIONS: { title: string; rows: Row[] }[] = [
  {
    title: "Vista",
    rows: [
      { label: "Titolo", value: "Superiore" },
      { label: "Larghezza", value: "1491", dim: true },
      { label: "Altezza", value: "781", dim: true },
      { label: "Proiezione", value: "Parallela", kind: "select" },
      { label: "Bloccato", kind: "check" },
    ],
  },
  {
    title: "Camera",
    rows: [
      { label: "Lunghezza focale(mm)", value: "50.0", dim: true },
      { label: "Rotazione", value: "0.0" },
      { label: "Posizione X", value: "1008.079" },
      { label: "Posizione Y", value: "1130.108" },
      { label: "Posizione Z", value: "0.51" },
      { label: "Distanza da destinazione", value: "0.510", kind: "static" },
      { label: "Posizione", value: "Colloca...", kind: "button" },
    ],
  },
  {
    title: "Destinazione",
    rows: [
      { label: "Destinazione X", value: "1008.079" },
      { label: "Destinazione Y", value: "1130.108" },
      { label: "Destinazione Z", value: "0.0" },
      { label: "Posizione", value: "Colloca...", kind: "button" },
    ],
  },
  {
    title: "Sfondo",
    rows: [
      { label: "Nome file", value: "(nessuno)", kind: "file" },
      { label: "Mostra", kind: "check", on: true },
      { label: "Grigio", kind: "check", on: true },
    ],
  },
];

function PropertyValue({ id, row }: { id: string; row: Row }) {
  if (row.kind === "check") {
    return <div className="flex items-center pb-px pl-0.5"><Check id={id} label={row.label} on={row.on} hideLabel /></div>;
  }
  if (row.kind === "button") {
    return (
      <div className="flex items-center">
        <button id={id} type="button" className="ml-px -mr-1 h-[19px] flex-1 rounded border border-[#ccc] border-b-[#aaa] bg-[#fdfdfd] text-black">{row.value}</button>
      </div>
    );
  }
  if (row.kind === "select") {
    return (
      <div className="relative bg-white">
        <select id={id} className="h-5 w-full appearance-none bg-white pl-[3px]">
          <option>{row.value}</option>
          <option>Prospettica</option>
        </select>
        <span className="pointer-events-none absolute inset-y-0 -right-1 flex w-[21px] items-center rounded border border-[#bbb] bg-[#fdfdfd] pl-1">
          <svg viewBox="0 0 10 6" className="h-1.5 w-2.5" fill="none" stroke="#444"><path d="M1 1l4 4 4-4" /></svg>
        </span>
      </div>
    );
  }
  if (row.kind === "file") {
    return (
      <div className="flex items-center bg-white">
        <input id={id} defaultValue={row.value} className="h-5 min-w-0 flex-1 pb-0.5 pl-0.5 outline-none" />
        <button type="button" aria-label="Sfoglia" className="h-[19px] w-[17px] shrink-0 rounded-l border border-r-0 border-[#bbb] bg-[#fdfdfd] text-black">...</button>
      </div>
    );
  }
  if (row.kind === "static") {
    return <output id={id} className="pl-1 leading-[18px]">{row.value}</output>;
  }
  return <input id={id} defaultValue={row.value} className="h-5 w-full min-w-0 bg-white pb-0.5 pl-1 outline-none" />;
}

function PropertiesPanel() {
  return (
    <aside className="mb-[5px] ml-2 flex w-[325px] shrink-0 flex-col">
      <div className="mt-[3px] h-[3px] border-y border-[#ccd2e2]" />
      <div className="mt-0.5 flex h-[21px] items-stretch">
        <button type="button" className="relative w-[84px] shrink-0">
          <svg viewBox="0 0 90 21" className="absolute inset-0 h-[21px] w-[90px] max-w-none" fill="none" stroke="#c2c9de"><path d="M.5 21V4l3-3.500H70L90 20.500" /></svg>
          <span className="relative flex items-center gap-[3px] pl-1 leading-6">
            <svg viewBox="0 0 16 16" className="h-4 w-4"><ColorRing cx={8} cy={8} r={5.500} w={3} /></svg>
            Proprietà
          </span>
        </button>
        <button type="button" className="relative w-[72px] shrink-0">
          <svg viewBox="0 0 76 21" className="absolute inset-0 -left-1 h-[21px] w-[76px] max-w-none" fill="none" stroke="#c2c9de"><path d="M.5 12V4l3-3.500H52L74 20.500" /></svg>
          <span className="relative flex items-center gap-1 leading-6">
            <svg viewBox="7 8 25 25" className="h-[17px] w-[17px]">{LAYERS_ART}</svg>
            Livelli
          </span>
        </button>
        <div className="flex-1 border-b border-[#c2c9de]" />
      </div>
      <div className="flex flex-1 flex-col border-b border-l border-[#c2c9de] pl-[5px]">
        <div className="flex gap-1.5 pt-[5px]">
          <button type="button" aria-label="Vista" className="h-7 w-7 bg-[#a9bbf0]">
            <svg viewBox="0 0 28 28" className="h-7 w-7">
              <path d="M5 9h4l2-3h7l2 3h3l2 2v10l-2 2H5l-1-2V11z" fill="#2d2f2f" stroke="#111" />
              <circle cx="15" cy="15.500" r="5.500" fill="#161818" stroke="#999" />
              <circle cx="15" cy="15.500" r="2.500" fill="#2c4a3c" stroke="#bbb" />
              <path d="M6 11h3" stroke="#aaa" />
            </svg>
          </button>
          <button type="button" aria-label="Sfondo" className="h-7 w-7">
            <svg viewBox="0 0 28 28" className="h-7 w-7">
              <rect x="1" y="3.500" width="22" height="21" fill="#c8cacc" stroke="#333" strokeWidth="1.500" />
              <rect x="3" y="6" width="18" height="16" fill="#d5e8ee" stroke="#35b8e8" />
              <rect x="5" y="8" width="14" height="12" fill="#fff" stroke="#e01818" />
            </svg>
          </button>
        </div>
        <div className="mt-[9px] pl-0.5 text-[#222]">
          {SECTIONS.map((section) => (
            <section key={section.title}>
              <h3 className="h-[26px] border-b border-[#d9dce6] text-[13px] leading-6">{section.title}</h3>
              {section.rows.map((row, i) => {
                const id = `${section.title}-${i}`;
                return (
                  <div key={id} className="ml-[15px] grid h-[21px] grid-cols-[144px_minmax(0,1fr)] border-b border-[#dcdfe6]">
                    <label htmlFor={id} className={row.dim ? "border-r border-[#dcdfe6] pl-1 leading-[18px] whitespace-nowrap text-[#777]" : "border-r border-[#dcdfe6] pl-1 leading-[18px] whitespace-nowrap"}>{row.label}</label>
                    <PropertyValue id={id} row={row} />
                  </div>
                );
              })}
            </section>
          ))}
        </div>
      </div>
    </aside>
  );
}

const OSNAPS = [
  { label: "Fine", on: true },
  { label: "Vicino", on: true },
  { label: "Punto" },
  { label: "Medio", on: true },
  { label: "Cen" },
  { label: "Int" },
  { label: "Perp", on: true },
  { label: "Tan" },
  { label: "Quad" },
  { label: "Nodo" },
  { label: "Vertice" },
  { label: "Proietta", round: true },
  { label: "Disabilita", round: true },
];

const STATUS = [
  { label: "Assoluto", size: "w-[50px] justify-center bg-[#cdd7ee] font-bold" },
  { label: "x -554.172", size: "w-[88px] justify-center" },
  { label: "y 2733.743", size: "w-[88px] justify-center" },
  { label: "z", size: "w-[88px] justify-center" },
  { label: "Centimetri", size: "w-[88px] justify-center" },
  { label: "Predefinito", size: "w-[168px] pl-[3px] gap-0.5", swatch: true },
  { label: "Snap alla griglia", size: "w-[97px] justify-center" },
  { label: "Orto", size: "w-[38px] justify-center bg-[#cdd7ee] font-bold" },
  { label: "Planare", size: "w-[53px] justify-center bg-[#cdd7ee] font-bold" },
  { label: "Osnap", size: "w-12 justify-center bg-[#cdd7ee] font-bold" },
  { label: "SmartTrack", size: "w-[73px] justify-center" },
  { label: "Gumball", size: "w-[59px] justify-center bg-[#cdd7ee] font-bold" },
  { label: "Registra storia", size: "w-[88px] justify-center" },
  { label: "Filtro", size: "w-[41px] justify-center" },
];

function TitleBar() {
  return (
    <header className="flex h-[21px] shrink-0 items-start bg-[#f3f3f3] text-[#8c8c8c]">
      <svg viewBox="0 0 17 17" className="h-[17px] w-[17px]">
        <path d="M0 0h17v17H0z" fill="#000" />
        <path d="M2 2l3 1-1 3 4 2 3-3 3 1 2 4-4 2-3 4-4-2-4-6z" fill="#fff" />
        <path d="M7 6l2 4 3-1M5 9l3 3" stroke="#000" fill="none" />
      </svg>
      <h1 className="ml-1.5 leading-5">Copia_speculare_Tolleranza.3dm (211 KB) - Rhino 7 Licenza Lab Not For Resale - [Superiore]</h1>
      <div className="ml-auto flex items-center gap-[34px] pr-2">
        <button type="button" aria-label="Riduci" className="h-4 w-3">
          <svg viewBox="0 0 12 16" className="h-4 w-3" stroke="#777"><path d="M1 8.500h10" /></svg>
        </button>
        <button type="button" aria-label="Ripristina" className="h-4 w-3">
          <svg viewBox="0 0 12 16" className="h-4 w-3" fill="none" stroke="#777"><rect x="1.500" y="5.500" width="7" height="7" rx="1" /><path d="M3.500 5V4l1-.5h5l1 1v6" /></svg>
        </button>
        <button type="button" aria-label="Chiudi" className="h-4 w-3">
          <svg viewBox="0 0 12 16" className="h-4 w-3" stroke="#777"><path d="M1 3.500l10 10M11 3.500l-10 10" /></svg>
        </button>
      </div>
    </header>
  );
}

export default function App() {
  const [tab, setTab] = useState("Standard");

  return (
    <div className="flex h-screen flex-col overflow-hidden bg-[#ebecf0] font-['Noto_Sans',sans-serif] text-[11px] text-[#222]">
      <Gradients />
      <TitleBar />

      <nav className="flex h-[18px] shrink-0 gap-[15px] bg-white pl-1.5 leading-5 text-[#666]">
        {MENU.map((item) => (
          <button key={item} type="button">{item}</button>
        ))}
      </nav>

      {/* command history and prompt */}
      <div className="mt-[5px] flex shrink-0">
        <div className="mr-px ml-0.5 w-[3px] border-x border-[#ccd2e2]" />
        <div className="flex-1 bg-white text-black">
          <div className="-mt-px mr-1.5 h-[45px] pl-px leading-[15px]">
            <p>Selezionare gli oggetti per la copia speculare</p>
            <p>Selezionare gli oggetti per la copia speculare. Premere Invio al termine</p>
            <p className="whitespace-pre">Inizio del piano di riflessione ( 3Punti  Copia=Sì  AsseX  AsseY  AsseZ ): AsseY</p>
          </div>
          <div className="flex h-[19px] items-start border-t border-[#bcc4da] pl-px">
            <label htmlFor="command" className="leading-4 font-bold">Comando:</label>
            <input id="command" className="h-4 flex-1 bg-transparent px-1 outline-none" />
            <span className="mt-px h-4 w-[5px] border border-r-0 border-[#999] bg-[#eee]" />
          </div>
        </div>
      </div>

      {/* toolbar tabs and the standard toolbar */}
      <div className="mt-[3px] flex shrink-0 border-t border-[#d2d8e6]">
        <div className="mt-1 mb-[5px] ml-0.5 w-[3px] border-x border-[#ccd2e2]" />
        <div className="min-w-0 flex-1">
          <div className="flex h-[21px] border-b border-[#c2c9de] pt-1">
            {TOOLBAR_TABS.map((name) => (
              <button
                key={name}
                type="button"
                onClick={() => setTab(name)}
                className={name === tab ? "-mb-px rounded-t border border-b-0 border-[#c2c9de] bg-[#ebecf0] px-2.5 leading-4 whitespace-nowrap" : "px-[11px] leading-[18px] whitespace-nowrap"}
              >
                {name}
              </button>
            ))}
          </div>
          <div className="flex h-12">
            {TOP_TOOLS.map((tool) => (
              <ToolButton key={tool.name} tool={tool} />
            ))}
          </div>
        </div>
      </div>

      <main className="flex min-h-0 flex-1">
        <div className="w-[82px] shrink-0">
          <div className="mt-[3px] mr-1.5 mb-px ml-0.5 h-[3px] border-y border-[#ccd2e2]" />
          <div className="-ml-px grid w-[72px] grid-cols-2">
            {SIDE_TOOLS.map((tool) => (
              <ToolButton key={tool.name} tool={tool} />
            ))}
          </div>
        </div>

        <div className="flex min-w-0 flex-1 flex-col">
          <div className="relative min-h-0 flex-1 overflow-hidden border border-[#bac3da] bg-[#9da3ab]">
            <Drawing />
            <button type="button" className="absolute top-0 left-0 flex h-[18px] items-center bg-[#849cee] pl-2 font-bold text-[#222]">
              Superiore
              <svg viewBox="0 0 11 18" className="ml-2.5 h-[18px] w-[11px]"><path d="M.5 1v16" stroke="#222" /><path d="M2 7h7l-3.500 4z" fill="#222" /></svg>
            </button>
          </div>
          <div className="flex h-[22px] items-center">
            <button type="button" className="h-full rounded-b border border-t-0 border-[#c2c9de] px-2 leading-5">Superiore</button>
            <button type="button" className="ml-2">Prospettica</button>
            <button type="button" className="ml-3.5">Davanti</button>
            <button type="button" className="ml-3.5">Destro</button>
            <button type="button" aria-label="Nuova vista" className="ml-3.5">
              <svg viewBox="0 0 9 9" className="h-[9px] w-[9px]" fill="none" stroke="#888"><path d="M3.500.5h2v3h3v2h-3v3h-2v-3h-3v-2h3z" /></svg>
            </button>
          </div>
        </div>

        <PropertiesPanel />
      </main>

      <div className="flex h-[25px] shrink-0 items-center">
        <div className="mr-[3px] ml-0.5 h-[18px] w-[3px] border-x border-[#ccd2e2]" />
        <div className="flex gap-[7px] pt-1">
          {OSNAPS.map((snap) => (
            <Check key={snap.label} id={`osnap-${snap.label}`} label={snap.label} on={snap.on} round={snap.round} />
          ))}
        </div>
      </div>

      <footer className="flex h-[18px] shrink-0 overflow-hidden border-t border-[#bcc4da] whitespace-nowrap">
        {STATUS.map((cell) => (
          <button key={cell.label} type="button" className={`flex h-5 shrink-0 items-center border-r border-[#bcc4da] ${cell.size}`}>
            {cell.swatch && <span className="h-[14px] w-[14px] bg-black" />}
            {cell.label}
          </button>
        ))}
        <p className="pl-0.5 leading-5">Memoria fisica disponibile: 26386 MB</p>
      </footer>
    </div>
  );
}
